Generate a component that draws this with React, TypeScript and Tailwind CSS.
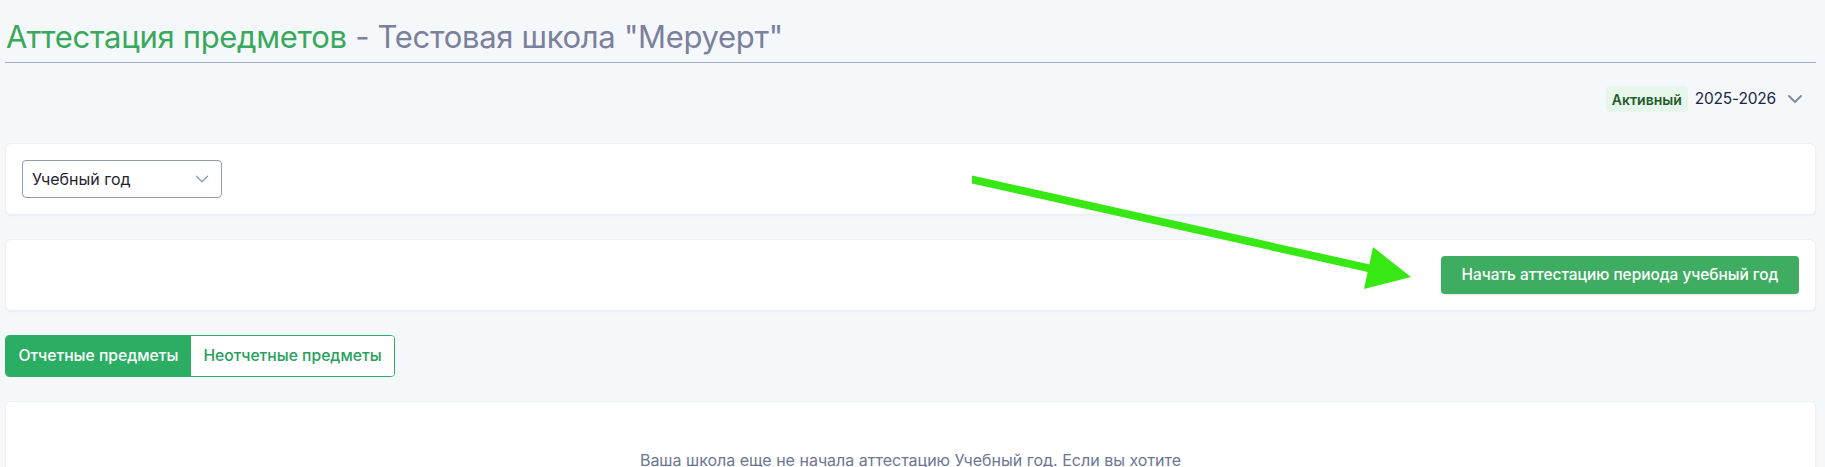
import React from "react";

function ChevronDown({ className, strokeWidth = 2 }: { className?: string; strokeWidth?: number }) {
  return (
    <svg viewBox="0 0 24 24" fill="none" stroke="currentColor" strokeWidth={strokeWidth} strokeLinecap="round" strokeLinejoin="round" className={className}>
      <path d="M6 9l6 6 6-6" />
    </svg>
  );
}

export default function App() {
  return (
    <div
      className="relative h-[467px] overflow-hidden bg-[#f5f8fb] pl-[5px] pr-[9px]"
      style={{ fontFamily: "Inter, 'Noto Sans', sans-serif" }}
    >
      {/* Page heading */}
      <div className="border-b border-[#aab0c1] pt-[18px] pb-[6px]">
        <h1 className="pl-[1px] text-[31px] leading-[38px] font-normal tracking-[-0.3px]">
          <span className="text-[#38a85a]">Аттестация предметов</span>
          <span className="text-[#7b809c]"> - Тестовая школа "Меруерт"</span>
        </h1>
      </div>

      {/* Academic year status */}
      <div className="mt-[23px] mb-[31px] flex h-[26px] items-center justify-end pr-[9px]">
        <span className="flex h-[26px] items-center rounded-[4px] bg-[#e7f6ea] px-[6px] text-[14px] font-semibold text-[#1f5b2c]">
          Активный
        </span>
        <span className="ml-[7px] text-[15.5px] tracking-[-0.2px] text-[#1e2541]">2025-2026</span>
        <ChevronDown className="ml-[7px] h-6 w-6 text-[#858aa3]" />
      </div>

      <div className="flex flex-col gap-6">
        {/* Filter card */}
        <div className="rounded-[6px] border border-[#edf0f4] bg-white p-4 shadow-[0_1px_2px_rgba(30,40,70,0.05)]">
          <div className="flex h-[38px] w-[200px] items-center justify-between rounded-[4px] border border-[#8e9db2] pl-[9px] pr-[8px]">
            <span className="text-[16px] text-[#1f2330]">Учебный год</span>
            <ChevronDown className="h-[22px] w-[22px] text-[#8ea2b6]" strokeWidth={1.6} />
          </div>
        </div>

        {/* Action card */}
        <div className="flex justify-end rounded-[6px] border border-[#edf0f4] bg-white p-4 shadow-[0_1px_2px_rgba(30,40,70,0.05)]">
          <button className="flex h-[38px] w-[358px] items-center justify-center rounded-[4px] bg-[#3ead62] text-[15.4px] font-medium text-white shadow-[0_1px_2px_rgba(0,0,0,0.1)]">
            Начать аттестацию периода учебный год
          </button>
        </div>

        {/* Tabs */}
        <div className="flex h-[42px] w-[390px] overflow-hidden rounded-[4px] border border-[#2bae63]">
          <div className="flex w-[185px] items-center justify-center bg-[#2bae63] text-[15.7px] font-medium text-white">
            Отчетные предметы
          </div>
          <div className="flex flex-1 items-center justify-center bg-white text-[15.7px] font-medium text-[#27a05a]">
            Неотчетные предметы
          </div>
        </div>

        {/* Empty state */}
        <div className="rounded-[6px] border border-[#edf0f4] bg-white pt-12 pb-12 shadow-[0_1px_2px_rgba(30,40,70,0.05)]">
          <p className="mx-auto max-w-[580px] text-center text-[16px] leading-[20px] text-[#6c7594]">
            Ваша школа еще не начала аттестацию Учебный год. Если вы хотите начать аттестацию, нажмите кнопку выше.
          </p>
        </div>
      </div>

      {/* Annotation arrow */}
      <svg className="pointer-events-none absolute left-0 top-0" width="1825" height="467" viewBox="0 0 1825 467">
        <polygon points="972,175.5 1370,264.5 1370,272.5 972,183.5" fill="#37e814" />
        <polygon points="1373,247 1411,277 1364,289" fill="#37e814" />
      </svg>
    </div>
  );
}
